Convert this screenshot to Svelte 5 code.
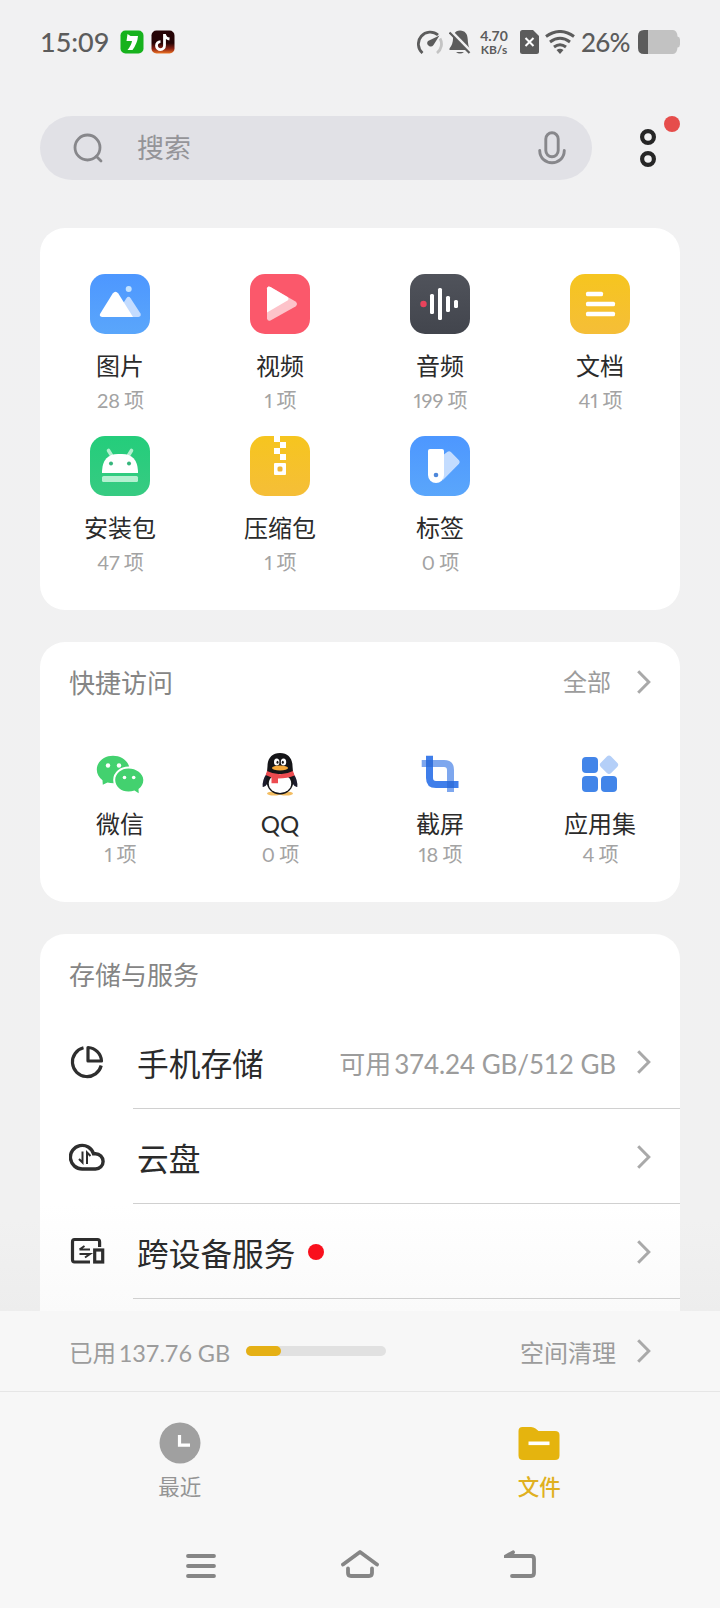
<script>
	let categories = [
		{ icon: "image", name: "图片", count: 28 },
		{ icon: "video", name: "视频", count: 1 },
		{ icon: "audio", name: "音频", count: 199 },
		{ icon: "doc", name: "文档", count: 41 },
		{ icon: "apk", name: "安装包", count: 47 },
		{ icon: "zip", name: "压缩包", count: 1 },
		{ icon: "tag", name: "标签", count: 0 },
	];

	let shortcuts = [
		{ icon: "wechat", name: "微信", count: 1 },
		{ icon: "qq", name: "QQ", count: 0 },
		{ icon: "crop", name: "截屏", count: 18 },
		{ icon: "apps", name: "应用集", count: 4 },
	];

	let services = [
		{ icon: "storage", name: "手机存储", prefix: "可用", detail: "374.24 GB/512 GB" },
		{ icon: "cloud", name: "云盘" },
		{ icon: "devices", name: "跨设备服务", dot: true },
	];

	let usedPercent = 25;
</script>

{#snippet chevron()}
	<svg class="chevron" width="14" height="24" viewBox="0 0 14 24">
		<path d="M1.2 1.2 L11.8 12 L1.2 22.8" fill="none" stroke="#a9a9a9" stroke-width="3" />
	</svg>
{/snippet}

{#snippet tileIcon(name)}
	<svg width="60" height="60" viewBox="0 0 60 60">
		{#if name === "image"}
			<path d="M33 42 L32 31 L36.4 24.2 Q38.5 21.5 40.6 24.2 L50.5 39.5 Q51.5 42.5 48.5 43 L34 43 Z" fill="#c3dcff" />
			<path d="M12 43 Q8.8 42.5 10.3 39.5 L22.7 19.5 Q25.5 15.8 28.3 19.5 L43 43 Z" fill="#fff" />
			<circle cx="38.7" cy="15" r="3" fill="#c3e2ff" />
		{:else if name === "video"}
			<path d="M17 14.5 Q17.5 11.5 20.5 13 L45.5 27.5 Q48.5 30 45.5 32.5 L20.5 46.5 Q17.5 47.5 17 44.5 Z" fill="#fdc3ca" />
			<path d="M17 14.5 Q17.5 11.5 20.5 13 L37.5 23 Q39.5 25 37.5 26.5 L17 38.5 Z" fill="#fff" />
		{:else if name === "audio"}
			<circle cx="13.5" cy="30" r="3.2" fill="#e9435c" />
			<g fill="#fff">
				<rect x="20" y="20" width="4" height="20" rx="1.5" />
				<rect x="28" y="14" width="4" height="32" rx="1.5" />
				<rect x="36" y="22" width="4" height="16" rx="1.5" />
				<rect x="44" y="26" width="4" height="8" rx="1.5" />
			</g>
		{:else if name === "doc"}
			<g fill="#fff">
				<rect x="16" y="17.7" width="17" height="4.6" rx="1.5" />
				<rect x="16" y="27.7" width="29" height="4.6" rx="1.5" />
				<rect x="16" y="37.7" width="29" height="4.6" rx="1.5" />
			</g>
		{:else if name === "apk"}
			<path d="M18.5 14.5 L22.5 21 M41.5 14.5 L37.5 21" stroke="#b4f0d0" stroke-width="3.6" stroke-linecap="round" />
			<path d="M12 37 V35 Q13 18 28 18 H32 Q47 18 48 35 V37 Z" fill="#fff" />
			<rect x="12" y="40" width="36" height="6" rx="1.5" fill="#b4f0d0" />
			<circle cx="21" cy="27.5" r="2" fill="#35b57b" />
			<circle cx="39" cy="27.5" r="2" fill="#35b57b" />
		{:else if name === "zip"}
			<path d="M24 0h6v6h-6z M30 6h6v6h-6z M24 12h6v6h-6z M30 18h6v6h-6z" fill="#fff" />
			<rect x="24" y="27" width="12" height="12" rx="1" fill="#fff" />
			<rect x="27.5" y="30.5" width="5" height="5" rx="1.5" fill="#edb638" />
		{:else}
			<path d="M32 20 L37.5 15.8 Q39.2 14.5 40.9 16 L49 24.2 Q50.5 26 49 27.7 L32.5 44.5 Z" fill="#c3dcff" />
			<path d="M18 15 Q18 13 20 13 H32 Q34 13 34 15 V39 A8 8 0 0 1 18 39 Z" fill="#fff" />
			<circle cx="26" cy="39" r="2.3" fill="#4d87da" />
		{/if}
	</svg>
{/snippet}

{#snippet shortcutIcon(name)}
	<svg width="60" height="60" viewBox="0 0 60 60">
		{#if name === "wechat"}
			<path d="M23 11.7 C14 11.7 6.8 17.8 6.8 25.5 C6.8 30 9 33.7 12.5 36.2 L12.8 40.8 L17.5 38.5 Q20 39.3 24 39.3 C32 39.3 39.5 33.5 39.5 25.5 C39.5 17.8 32 11.7 23 11.7 Z" fill="#43d16f" />
			<path d="M38.5 24.6 C31.3 24.6 25.2 29.5 25.2 36 C25.2 42.5 31.3 47.6 38.5 47.6 Q41.5 47.6 44.5 46.6 L48.7 49.2 L48.5 45 C51.5 42.8 53.3 39.8 53.3 36 C53.3 29.5 46 24.6 38.5 24.6 Z" fill="#43d16f" stroke="#fff" stroke-width="4" paint-order="stroke" />
			<g fill="#fff">
				<circle cx="18" cy="21.5" r="2.2" />
				<circle cx="29" cy="21.5" r="2.2" />
				<circle cx="34.5" cy="33.5" r="1.8" />
				<circle cx="43.7" cy="33.5" r="1.8" />
			</g>
		{:else if name === "qq"}
			<ellipse cx="24" cy="49.5" rx="7" ry="2" fill="#f3bd62" />
			<ellipse cx="36" cy="49.5" rx="7" ry="2" fill="#f3bd62" />
			<path d="M17 29 Q12 36 12.7 43 Q15 43.5 17.5 39.5 Z M43 29 Q48 36 47.3 43 Q45 43.5 42.5 39.5 Z" fill="#1c1c2c" />
			<path d="M30 9 C22 9 17.5 14.5 17.5 22 L16.5 34 C15.5 44 22 50.5 30 50.5 C38 50.5 44.5 44 43.5 34 L42.5 22 C42.5 14.5 38 9 30 9 Z" fill="#151518" />
			<ellipse cx="30" cy="39.5" rx="11.2" ry="9.6" fill="#fff" />
			<path d="M17 27 Q30 33.5 43 27 L44.5 31.5 Q38 34.5 28 34.5 V39.3 H21.5 V33.5 L15.7 31 Z" fill="#ed4b50" />
			<ellipse cx="26.7" cy="18" rx="2.7" ry="3.5" fill="#fff" />
			<ellipse cx="33.5" cy="18" rx="2.7" ry="3.5" fill="#fff" />
			<ellipse cx="27.5" cy="18.3" rx="1" ry="1.5" fill="#151518" />
			<ellipse cx="32.8" cy="18.3" rx="1" ry="1.5" fill="#151518" />
			<ellipse cx="30" cy="24" rx="8" ry="2.4" fill="#f5a93b" />
		{:else if name === "crop"}
			<path d="M11.7 19.5 H34 Q40.5 19.5 40.5 26 V48" fill="none" stroke="#7ea7ee" stroke-width="7" />
			<path d="M19.5 11.7 V34 Q19.5 40.5 26 40.5 H48.5" fill="none" stroke="#3f7eea" stroke-width="7" />
			<path d="M16 16 h7 v7 h-7 z M37 37 h7 v7 h-7 z" fill="#3270dc" />
		{:else}
			<g fill="#4285e9">
				<rect x="12" y="13" width="16" height="16" rx="4" />
				<rect x="12" y="32" width="16" height="16" rx="4" />
				<rect x="31" y="32" width="16" height="16" rx="4" />
			</g>
			<rect x="31.7" y="13.5" width="14.6" height="14.6" rx="3" transform="rotate(45 39 20.8)" fill="#b4cff8" />
		{/if}
	</svg>
{/snippet}

{#snippet serviceIcon(name)}
	<svg width="36" height="36" viewBox="0 0 36 36" fill="none" stroke="#2e2e2e" stroke-width="3.2">
		{#if name === "storage"}
			<path d="M14.5 3.8 A14.6 14.6 0 1 0 32.2 21.5" />
			<path d="M19 3.5 A14.3 14.3 0 0 1 32.5 17 H19 Z" stroke-linejoin="round" />
		{:else if name === "cloud"}
			<path d="M13.5 30 H26.5 A7.5 7.5 0 0 0 26.5 14.8 H24.5 A11.8 11.8 0 1 0 13.5 30 Z" stroke-width="3.4" />
			<path d="M13.5 12.5 V23.5 L10 20 M18 25 V13.5 L21.5 17" stroke-width="2" />
		{:else}
			<path d="M30.6 13 V8 Q30.6 5.5 28.5 5.5 H5.5 Q3.5 5.5 3.5 8 V25.5 Q3.5 28 5.5 28 H21" />
			<rect x="25.7" y="16" width="8" height="12" />
			<path d="M10.500 15.500 H21 M10.500 15.500 L15.500 12 M10.500 20 H21 L16 23.500" stroke-width="2" />
		{/if}
	</svg>
{/snippet}

<div class="screen">
	<div class="status-bar">
		<span class="time">15:09</span>
		<svg class="app-green" width="24" height="24" viewBox="0 0 24 24">
			<rect x="0.5" y="0.5" width="23" height="23" rx="5" fill="#17b21d" />
			<path d="M7.5 4 L10.500 6 H18 Q17.500 13 12.500 20 H7.500 Q11.500 15 12 11 L6.500 11 Z" fill="#fff" />
		</svg>
		<svg width="24" height="24" viewBox="0 0 24 24">
			<defs>
				<linearGradient id="fire" x1="0" y1="0" x2="0" y2="1">
					<stop offset="0.55" stop-color="#260406" />
					<stop offset="0.8" stop-color="#8f2415" />
					<stop offset="1" stop-color="#ee7524" />
				</linearGradient>
			</defs>
			<rect x="0.5" y="0.5" width="23" height="23" rx="5" fill="url(#fire)" />
			<path d="M13.5 4 V15.5 A4 4 0 1 1 9.5 11.6 M13.5 4.5 Q14.5 8.5 18.5 9" fill="none" stroke="#fff" stroke-width="2.8" />
		</svg>

		<div class="status-right">
			<svg width="26" height="24" viewBox="0 0 26 24" fill="none" stroke-width="2.8">
				<path d="M5.5 23 A11.2 11.2 0 0 1 21 5" stroke="#5c5c5c" />
				<path d="M23 8.5 A11.2 11.2 0 0 1 20 23" stroke="#c4c4c4" />
				<path d="M22.5 5.5 L16.500 15 A3.4 3.4 0 1 1 11 11 Z" fill="#5c5c5c" />
			</svg>
			<svg class="bell" width="22" height="24" viewBox="0 0 22 24">
				<path d="M11 0.5 C5.5 0.5 4 5 4 9 Q4 14 0.5 18.5 V20 H20.5 V18.5 Q19 15.5 18.7 9 C18.5 4 16 0.5 11 0.5 Z M7 22 H15 Q11 25 7 22 Z" fill="#5c5c5c" />
				<path d="M1.5 1 L22 22" stroke="#f1f1f2" stroke-width="3.500" />
				<path d="M0.5 2.500 L20.5 23" stroke="#5c5c5c" stroke-width="2.200" />
			</svg>
			<div class="speed">
				<span>4.70</span>
				<span class="unit">KB/s</span>
			</div>
			<svg class="sim" width="19" height="24" viewBox="0 0 19 24">
				<path d="M2.5 0 H13 L19 6 V21.5 Q19 24 16.5 24 H2.5 Q0 24 0 21.5 V2.5 Q0 0 2.5 0 Z" fill="#5c5c5c" />
				<path d="M5.5 8 L13.5 16 M13.5 8 L5.5 16" stroke="#fff" stroke-width="2" />
			</svg>
			<svg class="wifi" width="30" height="24" viewBox="0 0 30 24" fill="none" stroke="#5c5c5c" stroke-width="3">
				<path d="M1 6.5 Q15 -3.5 29 6.5" />
				<path d="M5 12 Q15 4.5 25 12" />
				<path d="M9 17 Q15 12.5 21 17" />
				<path d="M11.5 20 Q15 17.5 18.5 20 L15 24 Z" fill="#5c5c5c" stroke="none" />
			</svg>
			<span class="percent">26%</span>
			<svg class="battery" width="42" height="24" viewBox="0 0 42 24">
				<path d="M10 0 H35 Q39 0 39.5 6.5 Q42 7 42 9.5 V14.5 Q42 17 39.5 17.5 Q39 24 35 24 H10 Z" fill="#c2c2c2" />
				<path d="M10 0 H6 Q0 0 0 6 V18 Q0 24 6 24 H10 Z" fill="#5c5c5c" />
			</svg>
		</div>
	</div>

	<header>
		<div class="search">
			<svg width="30" height="30" viewBox="0 0 30 30" fill="none" stroke="#87878b" stroke-width="2.8" stroke-linecap="round">
				<circle cx="14.5" cy="14.5" r="12.5" />
				<path d="M23.5 23.5 L28 28" />
			</svg>
			<span>搜索</span>
			<svg width="28" height="34" viewBox="0 0 28 34" fill="none" stroke="#87878b" stroke-width="2.9" stroke-linecap="round">
				<rect x="7.8" y="1.8" width="12.4" height="24" rx="6.2" />
				<path d="M1.7 19.5 C2 35.8 26 35.8 26.3 19.5" />
			</svg>
		</div>
		<div class="more">
			<svg width="16" height="38" viewBox="0 0 16 38" fill="none" stroke="#262626" stroke-width="4.2">
				<circle cx="8" cy="8" r="5.9" />
				<circle cx="8" cy="30" r="5.9" />
			</svg>
			<span class="badge"></span>
		</div>
	</header>

	<main>
		<section class="card categories">
			{#each categories as item}
				<div class="item">
					<div class="tile {item.icon}">{@render tileIcon(item.icon)}</div>
					<div class="name">{item.name}</div>
					<div class="count">{item.count} 项</div>
				</div>
			{/each}
		</section>

		<section class="card shortcuts">
			<div class="card-header">
				<h2>快捷访问</h2>
				<span class="all">全部</span>
				{@render chevron()}
			</div>
			<div class="shortcut-row">
				{#each shortcuts as item}
					<div class="item">
						{@render shortcutIcon(item.icon)}
						<div class="name">{item.name}</div>
						<div class="count">{item.count} 项</div>
					</div>
				{/each}
			</div>
		</section>

		<section class="card services">
			<div class="card-header">
				<h2>存储与服务</h2>
			</div>
			{#each services as item}
				<div class="service">
					{@render serviceIcon(item.icon)}
					<div class="service-body">
						<span class="service-name">{item.name}</span>
						{#if item.dot}
							<span class="dot"></span>
						{/if}
						<div class="service-end">
							{#if item.detail}
								<span class="detail">{item.prefix}<span class="size">{item.detail}</span></span>
							{/if}
							{@render chevron()}
						</div>
					</div>
				</div>
			{/each}
		</section>
	</main>

	<div class="usage">
		<span class="used">已用<span class="size">137.76 GB</span></span>
		<div class="bar">
			<div class="fill" style="width: {usedPercent}%"></div>
		</div>
		<span class="clean">空间清理</span>
		{@render chevron()}
	</div>

	<nav class="tabs">
		<div class="tab">
			<svg width="42" height="42" viewBox="0 0 42 42">
				<circle cx="21" cy="21" r="20.5" fill="#a0a0a0" />
				<path d="M20.5 13 V23.2 H31" fill="none" stroke="#fff" stroke-width="3.2" />
			</svg>
			<span>最近</span>
		</div>
		<div class="tab active">
			<svg width="42" height="42" viewBox="0 0 42 42">
				<path d="M0.5 9 Q0.5 5 4.5 5 H13 Q15.5 5 17.5 6.5 L20.5 9 H37 Q41.5 9 41.5 13 V33.5 Q41.5 38 37 38 H5 Q0.5 38 0.5 33.5 Z" fill="#e5b40e" />
				<path d="M10.5 21.3 H31.5" stroke="#fff" stroke-width="3.6" />
			</svg>
			<span>文件</span>
		</div>
	</nav>

	<div class="system-nav">
		<svg width="30" height="28" viewBox="0 0 30 28" stroke="#868686" stroke-width="3.8" stroke-linecap="round">
			<path d="M2 6 H28 M2 16 H28 M2 26 H28" />
		</svg>
		<svg width="38" height="28" viewBox="0 0 38 28" fill="none" stroke="#868686" stroke-width="3.8" stroke-linecap="round" stroke-linejoin="round">
			<path d="M2 14.5 L19 2 L36 14.5" />
			<path d="M7 18.500 V23 Q7 26 10 26 H28 Q31 26 31 23 V18.500" />
		</svg>
		<svg width="32" height="28" viewBox="0 0 32 28" fill="none" stroke="#868686" stroke-width="3.8" stroke-linecap="round">
			<path d="M8 26 H27 Q30 26 30 23 V9 Q30 6 27 6 H2.500 L9 2.300" />
		</svg>
	</div>
</div>

<style>
	:global(body) {
		margin: 0;
		background-color: #f1f1f2;
		font-family: Lato, "Noto Sans CJK SC", sans-serif;
	}

	* {
		box-sizing: border-box;
	}

	svg {
		display: block;
		flex-shrink: 0;
	}

	.screen {
		display: flex;
		flex-direction: column;
		width: 720px;
		height: 1608px;
		overflow: hidden;
		background: linear-gradient(#f1f1f2 0, #f1f1f1 1220px, #ededed 1311px);
	}

	.status-bar {
		display: flex;
		align-items: center;
		height: 84px;
		padding: 0 40px;
		color: #5c5c5c;
	}

	.time {
		width: 80px;
		font-size: 27px;
		font-weight: 500;
		line-height: 28px;
	}

	.app-green {
		margin-right: 7px;
	}

	.status-right {
		display: flex;
		align-items: center;
		margin-left: auto;
	}

	.bell {
		margin-left: 6px;
	}

	.speed {
		display: flex;
		flex-direction: column;
		align-items: center;
		width: 30px;
		margin-left: 8px;
		font-size: 14px;
		font-weight: 700;
		line-height: 14px;
		white-space: nowrap;
	}

	.unit {
		font-size: 12px;
		line-height: 13px;
	}

	.sim {
		margin-left: 11px;
	}

	.wifi {
		margin-left: 6px;
	}

	.percent {
		width: 49px;
		margin-left: 6px;
		font-size: 26px;
		font-weight: 500;
		letter-spacing: -0.8px;
		line-height: 28px;
	}

	.battery {
		margin-left: 8px;
	}

	header {
		display: flex;
		align-items: center;
		justify-content: space-between;
		padding: 32px 40px 48px;
	}

	.search {
		display: flex;
		align-items: center;
		width: 552px;
		height: 64px;
		padding: 0 26px 0 33px;
		border-radius: 32px;
		background-color: #e1e1e6;
	}

	.search span {
		flex: 1;
		margin-left: 34px;
		font-size: 27px;
		line-height: 32px;
		color: #949498;
	}

	.more {
		position: relative;
		display: flex;
		justify-content: center;
		width: 64px;
	}

	.badge {
		position: absolute;
		top: -13px;
		right: 0;
		width: 16px;
		height: 16px;
		border-radius: 50%;
		background-color: #e64d4b;
	}

	main {
		display: flex;
		flex-direction: column;
		gap: 32px;
		height: 1083px;
		padding: 0 40px;
		overflow: hidden;
	}

	.card {
		flex-shrink: 0;
		border-radius: 25px;
		background-color: #fff;
	}

	.categories {
		display: grid;
		grid-template-columns: repeat(4, 1fr);
		grid-auto-rows: 162px;
		height: 382px;
		padding-top: 46px;
	}

	.item {
		display: flex;
		flex-direction: column;
		align-items: center;
	}

	.tile {
		border-radius: 15px;
		overflow: hidden;
	}

	.tile.image,
	.tile.tag {
		background: linear-gradient(#4d97ff, #5aa6fb);
	}

	.tile.video {
		background-color: #fb586b;
	}

	.tile.audio {
		background: linear-gradient(#50535b, #42454d);
	}

	.tile.doc,
	.tile.zip {
		background: linear-gradient(#f6c51f, #f5be38);
	}

	.tile.apk {
		background: linear-gradient(#24cd7b, #37cb82);
	}

	.name {
		margin-top: 16px;
		font-size: 24px;
		line-height: 32px;
		color: #2b2b2b;
	}

	.count {
		margin-top: 4px;
		padding-left: 1px;
		font-size: 20px;
		font-variant-numeric: proportional-nums;
		line-height: 28px;
		word-spacing: -1px;
		color: #a3a3a3;
	}

	.shortcuts {
		height: 260px;
	}

	.card-header {
		display: flex;
		align-items: center;
		height: 82px;
		padding: 0 29px;
	}

	h2 {
		flex: 1;
		margin: 0;
		font-size: 26px;
		font-weight: 400;
		line-height: 32px;
		color: #858585;
	}

	.all {
		margin-right: 26px;
		padding-bottom: 3px;
		font-size: 24px;
		line-height: 32px;
		color: #9c9c9c;
	}

	.shortcut-row {
		display: grid;
		grid-template-columns: repeat(4, 1fr);
		margin-top: 20px;
	}

	.shortcut-row .name {
		margin-top: 4px;
	}

	.shortcut-row .count {
		margin-top: 0;
	}

	.services {
		height: 420px;
		background: linear-gradient(#fff 270px, #fafafa 377px);
	}

	.services .card-header {
		height: 80px;
		padding-top: 2px;
	}

	.service {
		display: flex;
		align-items: center;
		height: 95px;
		padding-left: 29px;
	}

	.service-body {
		display: flex;
		flex: 1;
		align-items: center;
		height: 95px;
		margin-left: 28px;
		padding: 2px 29px 0 4px;
		border-bottom: 1px solid #d0d0d0;
	}

	.service-name {
		padding-top: 4px;
		font-size: 31.7px;
		line-height: 40px;
		color: #2b2b2b;
	}

	.dot {
		width: 16px;
		height: 16px;
		margin-left: 13px;
		border-radius: 50%;
		background-color: #f9101d;
	}

	.service-end {
		display: flex;
		align-items: center;
		margin-left: auto;
	}

	.detail {
		margin-right: 21px;
		padding-top: 3px;
		font-size: 26px;
		letter-spacing: -0.1px;
		line-height: 32px;
		color: #9c9c9c;
	}

	.size {
		margin-left: 3px;
	}

	.usage {
		display: flex;
		align-items: center;
		height: 81px;
		padding: 0 69px;
		border-bottom: 1px solid #e6e6e6;
		background-color: #f7f7f7;
		font-size: 24px;
		line-height: 32px;
		color: #9c9c9c;
	}

	.used {
		width: 177px;
		padding-top: 3px;
		font-size: 23.5px;
		letter-spacing: -0.1px;
		white-space: nowrap;
	}

	.bar {
		width: 140px;
		height: 10px;
		border-radius: 5px;
		background-color: #e1e1e1;
	}

	.fill {
		height: 10px;
		border-radius: 5px;
		background-color: #e5b015;
	}

	.clean {
		margin-left: auto;
		margin-right: 21px;
		padding-top: 3px;
	}

	.tabs {
		display: flex;
		height: 126px;
		padding: 30px 1px 0 0;
		background-color: #f7f7f7;
	}

	.tab {
		display: flex;
		flex: 1;
		flex-direction: column;
		align-items: center;
		font-size: 21.5px;
		line-height: 30px;
		color: #949494;
	}

	.tab span {
		margin-top: 8px;
	}

	.active {
		color: #e0b020;
		font-weight: 500;
	}

	.system-nav {
		display: flex;
		flex: 1;
		justify-content: center;
		gap: 125px;
		padding: 32px 0 0 1px;
		background-color: #f7f7f7;
	}

	.card-header .chevron {
		margin-bottom: 2px;
	}
</style>
